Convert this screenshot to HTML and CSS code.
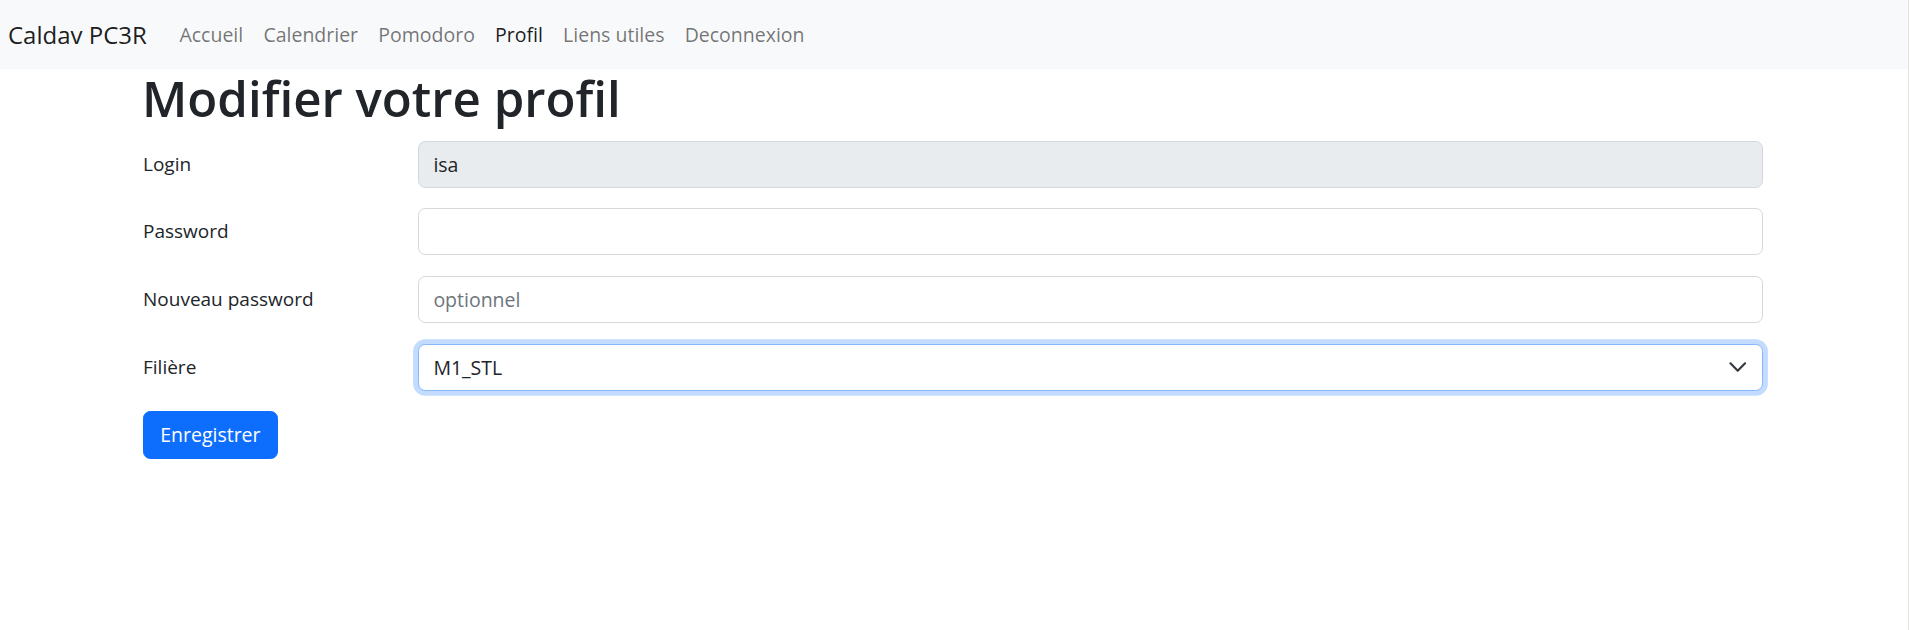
FILE: index.html
```html
<!DOCTYPE html>
<html lang="fr">
<head>
<meta charset="utf-8">
<title>Caldav PC3R - Profil</title>
<link rel="stylesheet" href="styles.css">
</head>
<body>
<nav class="navbar">
  <a class="brand" href="#">Caldav PC3R</a>
  <ul class="nav">
    <li><a class="nav-link" href="#">Accueil</a></li>
    <li><a class="nav-link" href="#">Calendrier</a></li>
    <li><a class="nav-link" href="#">Pomodoro</a></li>
    <li><a class="nav-link active" href="#">Profil</a></li>
    <li><a class="nav-link" href="#">Liens utiles</a></li>
    <li><a class="nav-link" href="#">Deconnexion</a></li>
  </ul>
</nav>
<main class="container">
  <h1 class="title">Modifier votre profil</h1>
  <form class="form">
    <div class="row">
      <label class="label" for="login">Login</label>
      <input class="control disabled" id="login" type="text" value="isa" disabled>
    </div>
    <div class="row">
      <label class="label" for="pwd">Password</label>
      <input class="control" id="pwd" type="password">
    </div>
    <div class="row">
      <label class="label" for="npwd">Nouveau password</label>
      <input class="control" id="npwd" type="password" placeholder="optionnel">
    </div>
    <div class="row">
      <label class="label" for="filiere">Filière</label>
      <div class="select-wrap">
        <select class="control select focus" id="filiere">
          <option>M1_STL</option>
        </select>
        <svg class="chevron" viewBox="0 0 16 16" width="19.5" height="19.5" aria-hidden="true"><path fill="none" stroke="#343a40" stroke-linecap="round" stroke-linejoin="round" stroke-width="1.8" d="m2 5 6 6 6-6"/></svg>
      </div>
    </div>
    <button class="btn" type="button">Enregistrer</button>
  </form>
</main>
</body>
</html>
```
FILE: styles.css
```css
* { box-sizing: border-box; }
html, body { margin: 0; padding: 0; }
body {
  font-family: "Open Sans", "Noto Sans", sans-serif;
  color: #212529;
  background: #fff;
  min-height: 100vh;
  border-right: 1px solid #e4e4df;
}
a { text-decoration: none; }

.navbar {
  display: flex;
  align-items: center;
  height: 69px;
  background: #f8f9fa;
  padding-left: 8px;
}
.brand {
  font-size: 24px;
  line-height: 36px;
  color: rgba(0, 0, 0, 0.9);
  margin-right: 22.5px;
}
.nav {
  display: flex;
  list-style: none;
  margin: 0;
  padding: 0;
}
.nav-link {
  display: block;
  font-size: 19.5px;
  line-height: 29px;
  padding: 0 10.1px;
  color: rgba(0, 0, 0, 0.55);
}
.nav-link.active { color: rgba(0, 0, 0, 0.9); }

.container {
  width: 1620px;
  margin-left: 143px;
}
.title {
  margin: 0 0 13px -1px;
  font-size: 49.2px;
  font-weight: 600;
  line-height: 58.6px;
  color: #212529;
}
.form { display: flex; flex-direction: column; }
.row {
  display: grid;
  grid-template-columns: 274.8px 1fr;
  align-items: center;
  margin-bottom: 20.67px;
}
.label {
  font-size: 19px;
  line-height: 29px;
}
.control {
  display: block;
  width: 100%;
  height: 47px;
  padding: 0 14.6px;
  font-family: inherit;
  font-size: 19.5px;
  color: #212529;
  background: #fff;
  border: 1.2px solid #d3d8dd;
  border-radius: 7.3px;
  outline: none;
}
.control::placeholder { color: #6c757d; opacity: 1; }
.control.disabled {
  background: #e9ecef;
  color: #212529;
  -webkit-text-fill-color: #212529;
  opacity: 1;
}
.select-wrap { position: relative; }
.select {
  appearance: none;
  -webkit-appearance: none;
  padding-right: 48px;
}
.select.focus {
  border-color: #86b7fe;
  box-shadow: 0 0 0 4.87px rgba(13, 110, 253, 0.25);
}
.chevron {
  position: absolute;
  right: 16px;
  top: 50%;
  transform: translateY(-50%);
  pointer-events: none;
}
.btn {
  align-self: flex-start;
  height: 47.3px;
  padding: 0 16.2px;
  font-family: inherit;
  font-size: 19.5px;
  color: #fff;
  background: #0d6efd;
  border: 1.2px solid #0d6efd;
  border-radius: 7.3px;
}
```
